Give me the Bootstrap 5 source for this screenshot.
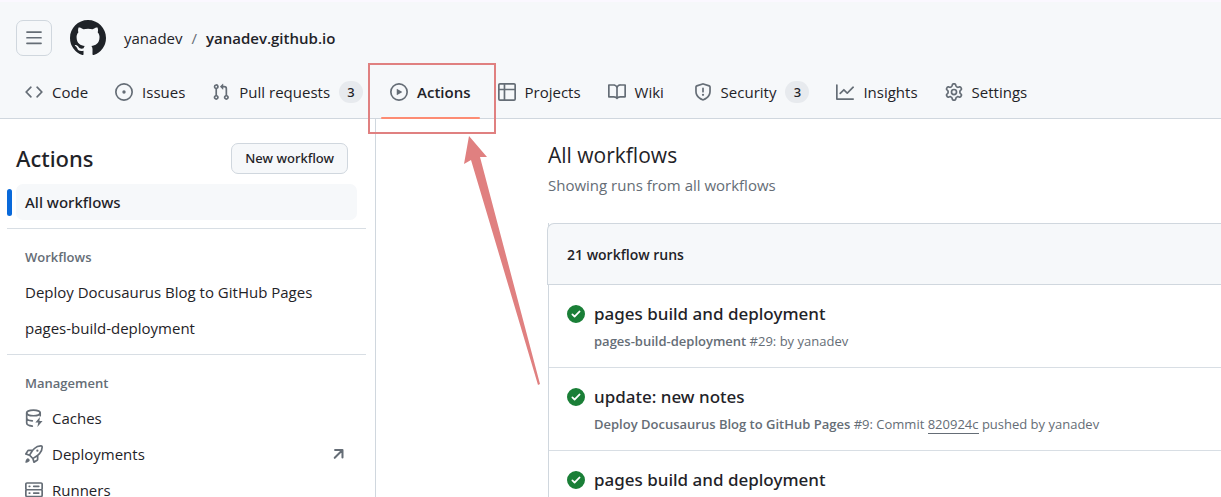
<!DOCTYPE html>
<html lang="en">
<head>
<meta charset="utf-8">
<meta name="viewport" content="width=device-width, initial-scale=1">
<title>Actions · yanadev/yanadev.github.io</title>
<link href="https://cdn.jsdelivr.net/npm/bootstrap@5.3.0/dist/css/bootstrap.min.css" rel="stylesheet">
<style>
  :root { --ink: #1f2328; --muted: #656d76; --line: #d0d7de; --soft-line: #d8dee4; --canvas: #f6f8fa; --note: #e08080; }
  body { font-family: "Open Sans", "Noto Sans", sans-serif; font-size: 15px; line-height: 24px; color: var(--ink); }
  a { color: inherit; text-decoration: none; }
  .oct { width: 18px; height: 18px; fill: currentColor; flex: none; color: var(--muted); }
  .app-header { background: var(--canvas); border-bottom: 1px solid var(--line); border-top: 2px solid #fbf8ff; }
  .top-row { padding: 18px 16px 0; gap: 18px; }
  .crumbs { gap: 9px; }
  .menu-btn { width: 36px; height: 36px; border: 1px solid var(--line); border-radius: 7px; background: transparent; }
  .logo { width: 36px; height: 36px; fill: #1f2328; }
  .crumb-sep { color: var(--muted); }
  .repo-tabs { padding: 9px 16px 0; gap: 9px; }
  .repo-tabs .nav-link { display: flex; align-items: center; gap: 9px; min-width: 77px; height: 53px; padding: 0 9px; color: var(--ink); white-space: nowrap; position: relative; }
  .repo-tabs .active { font-weight: 600; }
  .repo-tabs .active::after { content: ""; position: absolute; left: 0; right: 0; bottom: -1px; height: 2px; background: #fd8c73; border-radius: 2px; }
  .counter { min-width: 24px; height: 22px; border-radius: 11px; background: #e7eaee; font-size: 13px; line-height: 22px; font-weight: 500; text-align: center; }
  .note-box { position: absolute; left: -13px; top: -2px; width: 128px; height: 71px; border: 2px solid var(--note); z-index: 2; pointer-events: none; }
  .note-arrow { position: absolute; left: 82px; top: 71px; width: 78px; height: 250px; fill: var(--note); z-index: 2; pointer-events: none; }
  .side { flex: 0 0 376px; border-right: 1px solid var(--line); padding: 24px 9px 0 7px; }
  .side-head { padding: 0 18px 0 9px; margin-bottom: 10px; }
  .side h1, .runs-area h1 { line-height: 31px; margin: 0; }
  .side h1, .new-btn, .side-link.current, .run-title, .counter { font-family: "Noto Sans", "Open Sans", sans-serif; font-weight: 500; }
  .side h1 { font-size: 22px; }
  .new-btn { height: 31px; padding: 0 13px; border: 1px solid var(--line); border-radius: 7px; background: var(--canvas); color: var(--ink); font-size: 13px; line-height: 29px; }
  .side-link { display: flex; align-items: center; gap: 9px; height: 36px; margin: 0 9px; padding: 0 9px; border-radius: 7px; position: relative; }
  .side-link.current { background: var(--canvas); }
  .side-link.current::before { content: ""; position: absolute; left: -9px; top: 5px; width: 5px; height: 27px; border-radius: 3px; background: #0969da; }
  .side hr { margin: 8px 0; color: var(--soft-line); opacity: 1; }
  .side h2 { height: 37px; margin: 0; padding: 10px 18px 0; font-size: 13px; line-height: 20px; font-weight: 600; color: var(--muted); }
  .runs-area { padding: 21px 0 0 172px; min-width: 0; }
  .runs-area h1 { font-size: 21px; font-weight: 400; }
  .lede { color: var(--muted); margin: 2px 0 26px; }
  .runs { border-left: 1px solid var(--line); }
  .runs-head { margin-left: -2px; height: 62px; padding: 2px 0 0 19px; border: 1px solid var(--line); border-right: 0; border-top-left-radius: 7px; background: var(--canvas); font-weight: 600; font-size: 14px; }
  .run { height: 83px; padding: 17px 18px; gap: 9px; border-bottom: 1px solid var(--soft-line); }
  .run .oct { color: #1a7f37; margin-top: 3px; }
  .run-title { display: block; font-size: 17px; line-height: 24px; }
  .run-meta { display: block; font-size: 13px; line-height: 20px; margin-top: 5px; color: var(--muted); white-space: nowrap; }
  .run-meta b { font-weight: 600; }
  .sha { border-bottom: 1px solid var(--muted); }
</style>
</head>
<body class="vh-100 overflow-hidden d-flex flex-column bg-white">
<svg class="d-none" xmlns="http://www.w3.org/2000/svg">
  <symbol id="check" viewBox="0 0 16 16"><path d="M8 16A8 8 0 1 1 8 0a8 8 0 0 1 0 16Zm3.78-9.72a.751.751 0 0 0-.018-1.042.751.751 0 0 0-1.042-.018L6.75 9.19 5.28 7.72a.751.751 0 0 0-1.042.018.751.751 0 0 0-.018 1.042l2 2a.75.75 0 0 0 1.06 0Z"/></symbol>
</svg>

<header class="app-header">
  <div class="top-row d-flex align-items-center">
    <button class="menu-btn d-flex align-items-center justify-content-center p-0" type="button" aria-label="Open menu">
      <svg class="oct" viewBox="0 0 16 16"><path d="M1 2.75A.75.75 0 0 1 1.75 2h12.5a.75.75 0 0 1 0 1.5H1.75A.75.75 0 0 1 1 2.75Zm0 5A.75.75 0 0 1 1.75 7h12.5a.75.75 0 0 1 0 1.5H1.75A.75.75 0 0 1 1 7.75ZM1.75 12h12.5a.75.75 0 0 1 0 1.5H1.75a.75.75 0 0 1 0-1.5Z"/></svg>
    </button>
    <a href="#" aria-label="Homepage" class="d-flex">
      <svg class="logo" viewBox="0 0 16 16"><path d="M8 0c4.42 0 8 3.58 8 8a8.013 8.013 0 0 1-5.45 7.59c-.4.08-.55-.17-.55-.38 0-.27.01-1.13.01-2.2 0-.75-.25-1.23-.54-1.48 1.78-.2 3.65-.88 3.65-3.95 0-.88-.31-1.59-.82-2.15.08-.2.36-1.02-.08-2.12 0 0-.67-.22-2.2.82-.64-.18-1.32-.27-2-.27-.68 0-1.36.09-2 .27-1.53-1.03-2.2-.82-2.2-.82-.44 1.1-.16 1.92-.08 2.12-.51.56-.82 1.28-.82 2.15 0 3.06 1.86 3.75 3.64 3.95-.23.2-.44.55-.51 1.07-.46.21-1.61.55-2.33-.66-.15-.24-.6-.83-1.23-.82-.67.01-.27.38.01.53.34.19.73.9.82 1.13.16.45.68 1.31 2.69.94 0 .67.01 1.3.01 1.49 0 .21-.15.45-.55.38A7.995 7.995 0 0 1 0 8c0-4.42 3.58-8 8-8Z"/></svg>
    </a>
    <nav class="crumbs d-flex" aria-label="Breadcrumb">
      <a href="#">yanadev</a><span class="crumb-sep">/</span><a href="#" class="fw-semibold">yanadev.github.io</a>
    </nav>
  </div>
  <nav class="repo-tabs nav flex-nowrap" aria-label="Repository">
    <a class="nav-link" href="#"><svg class="oct" viewBox="0 0 16 16"><path d="m11.28 3.22 4.25 4.25a.75.75 0 0 1 0 1.06l-4.25 4.25a.749.749 0 0 1-1.275-.326.749.749 0 0 1 .215-.734L13.94 8l-3.72-3.72a.749.749 0 0 1 .326-1.275.749.749 0 0 1 .734.215Zm-6.56 0a.751.751 0 0 1 1.042.018.751.751 0 0 1 .018 1.042L2.06 8l3.72 3.72a.749.749 0 0 1-.326 1.275.749.749 0 0 1-.734-.215L.47 8.53a.75.75 0 0 1 0-1.06Z"/></svg><span>Code</span></a>
    <a class="nav-link" href="#"><svg class="oct" viewBox="0 0 16 16"><path d="M8 9.5a1.5 1.5 0 1 0 0-3 1.5 1.5 0 0 0 0 3Z"/><path d="M8 0a8 8 0 1 1 0 16A8 8 0 0 1 8 0ZM1.5 8a6.5 6.5 0 1 0 13 0 6.5 6.5 0 0 0-13 0Z"/></svg><span>Issues</span></a>
    <a class="nav-link" href="#"><svg class="oct" viewBox="0 0 16 16"><path d="M1.5 3.25a2.25 2.25 0 1 1 3 2.122v5.256a2.251 2.251 0 1 1-1.5 0V5.372A2.25 2.25 0 0 1 1.5 3.25Zm5.677-.177L9.573.677A.25.25 0 0 1 10 .854V2.5h1A2.5 2.5 0 0 1 13.5 5v5.628a2.251 2.251 0 1 1-1.5 0V5a1 1 0 0 0-1-1h-1v1.646a.25.25 0 0 1-.427.177L7.177 3.427a.25.25 0 0 1 0-.354ZM3.75 2.5a.75.75 0 1 0 0 1.5.75.75 0 0 0 0-1.5Zm0 9.5a.75.75 0 1 0 0 1.5.75.75 0 0 0 0-1.5Zm8.25.75a.75.75 0 1 0 1.5 0 .75.75 0 0 0-1.5 0Z"/></svg><span>Pull requests</span><span class="counter">3</span></a>
    <div class="position-relative">
      <a class="nav-link active" href="#" aria-current="page"><svg class="oct" viewBox="0 0 16 16"><path d="M8 0a8 8 0 1 1 0 16A8 8 0 0 1 8 0ZM1.5 8a6.5 6.5 0 1 0 13 0 6.5 6.5 0 0 0-13 0Zm4.879-2.773 4.264 2.559a.25.25 0 0 1 0 .428l-4.264 2.559A.25.25 0 0 1 6 10.559V5.442a.25.25 0 0 1 .379-.215Z"/></svg><span>Actions</span></a>
      <div class="note-box"></div>
      <svg class="note-arrow" viewBox="0 0 78 250" aria-hidden="true"><path d="M6 0 24 21 17 21 77 248 75 249 8 24 1 28Z"/></svg>
    </div>
    <a class="nav-link" href="#"><svg class="oct" viewBox="0 0 16 16"><path d="M0 1.75C0 .784.784 0 1.75 0h12.5C15.216 0 16 .784 16 1.75v12.5A1.75 1.75 0 0 1 14.25 16H1.75A1.75 1.75 0 0 1 0 14.25ZM6.5 6.5v8h7.75a.25.25 0 0 0 .25-.25V6.5Zm8-1.5V1.75a.25.25 0 0 0-.25-.25H6.5V5Zm-13 1.5v7.75c0 .138.112.25.25.25H5v-8ZM5 5V1.5H1.75a.25.25 0 0 0-.25.25V5Z"/></svg><span>Projects</span></a>
    <a class="nav-link" href="#"><svg class="oct" viewBox="0 0 16 16"><path d="M0 1.75A.75.75 0 0 1 .75 1h4.253c1.227 0 2.317.59 3 1.501A3.743 3.743 0 0 1 11.006 1h4.245a.75.75 0 0 1 .75.75v10.5a.75.75 0 0 1-.75.75h-4.507a2.25 2.25 0 0 0-1.591.659l-.622.621a.75.75 0 0 1-1.06 0l-.622-.621A2.25 2.25 0 0 0 5.258 13H.75a.75.75 0 0 1-.75-.75Zm7.251 10.324.004-5.073-.002-2.253A2.25 2.25 0 0 0 5.003 2.5H1.5v9h3.757a3.75 3.75 0 0 1 1.994.574ZM8.755 4.75l-.004 7.322a3.752 3.752 0 0 1 1.992-.572H14.5v-9h-3.495a2.25 2.25 0 0 0-2.25 2.25Z"/></svg><span>Wiki</span></a>
    <a class="nav-link" href="#"><svg class="oct" viewBox="0 0 16 16"><path d="M7.467.133a1.748 1.748 0 0 1 1.066 0l5.25 1.68A1.75 1.75 0 0 1 15 3.48V7c0 1.566-.32 3.182-1.303 4.682-.983 1.498-2.585 2.813-5.032 3.855a1.697 1.697 0 0 1-1.33 0c-2.447-1.042-4.049-2.357-5.032-3.855C1.32 10.182 1 8.566 1 7V3.48a1.75 1.75 0 0 1 1.217-1.667Zm.61 1.429a.25.25 0 0 0-.153 0l-5.25 1.68a.25.25 0 0 0-.174.238V7c0 1.358.275 2.666 1.057 3.86.784 1.194 2.121 2.34 4.366 3.297a.196.196 0 0 0 .154 0c2.245-.956 3.582-2.104 4.366-3.298C13.225 9.666 13.5 8.36 13.5 7V3.48a.251.251 0 0 0-.174-.237l-5.25-1.68ZM8.75 4.75v3a.75.75 0 0 1-1.5 0v-3a.75.75 0 0 1 1.5 0ZM9 10.5a1 1 0 1 1-2 0 1 1 0 0 1 2 0Z"/></svg><span>Security</span><span class="counter">3</span></a>
    <a class="nav-link" href="#"><svg class="oct" viewBox="0 0 16 16"><path d="M1.5 1.75V13.5h13.75a.75.75 0 0 1 0 1.5H.75a.75.75 0 0 1-.75-.75V1.75a.75.75 0 0 1 1.5 0Zm14.28 2.53-5.25 5.25a.75.75 0 0 1-1.06 0L7 7.06 4.28 9.78a.751.751 0 0 1-1.042-.018.751.751 0 0 1-.018-1.042l3.25-3.25a.75.75 0 0 1 1.06 0L10 7.94l4.72-4.72a.751.751 0 0 1 1.042.018.751.751 0 0 1 .018 1.042Z"/></svg><span>Insights</span></a>
    <a class="nav-link" href="#"><svg class="oct" viewBox="0 0 16 16"><path d="M8 0a8.2 8.2 0 0 1 .701.031C9.444.095 9.99.645 10.16 1.29l.288 1.107c.018.066.079.158.212.224.231.114.454.243.668.386.123.082.233.09.299.071l1.103-.303c.644-.176 1.392.021 1.82.63.27.385.506.792.704 1.218.315.675.111 1.422-.364 1.891l-.814.806c-.049.048-.098.147-.088.294.016.257.016.515 0 .772-.01.147.038.246.088.294l.814.806c.475.469.679 1.216.364 1.891a7.977 7.977 0 0 1-.704 1.217c-.428.61-1.176.807-1.82.63l-1.102-.302c-.067-.019-.177-.011-.3.071a5.909 5.909 0 0 1-.668.386c-.133.066-.194.158-.211.224l-.29 1.106c-.168.646-.715 1.196-1.458 1.26a8.006 8.006 0 0 1-1.402 0c-.743-.064-1.289-.614-1.458-1.26l-.289-1.106c-.018-.066-.079-.158-.212-.224a5.738 5.738 0 0 1-.668-.386c-.123-.082-.233-.09-.299-.071l-1.103.303c-.644.176-1.392-.021-1.82-.63a8.12 8.12 0 0 1-.704-1.218c-.315-.675-.111-1.422.363-1.891l.815-.806c.05-.048.098-.147.088-.294a6.214 6.214 0 0 1 0-.772c.01-.147-.038-.246-.088-.294l-.815-.806C.635 6.045.431 5.298.746 4.623a7.92 7.92 0 0 1 .704-1.217c.428-.61 1.176-.807 1.82-.63l1.102.302c.067.019.177.011.3-.071.214-.143.437-.272.668-.386.133-.066.194-.158.211-.224l.29-1.106C6.009.645 6.556.095 7.299.03 7.53.01 7.764 0 8 0Zm-.571 1.525c-.036.003-.108.036-.137.146l-.289 1.105c-.147.561-.549.967-.998 1.189-.173.086-.34.183-.5.29-.417.278-.97.423-1.529.27l-1.103-.303c-.109-.03-.175.016-.195.045-.22.312-.412.644-.573.99-.014.031-.021.11.059.19l.815.806c.411.406.562.957.53 1.456a4.709 4.709 0 0 0 0 .582c.032.499-.119 1.05-.53 1.456l-.815.806c-.081.08-.073.159-.059.19.162.346.353.677.573.989.02.03.085.076.195.046l1.102-.303c.56-.153 1.113-.008 1.53.27.161.107.328.204.501.29.447.222.85.629.997 1.189l.289 1.105c.029.109.101.143.137.146a6.6 6.6 0 0 0 1.142 0c.036-.003.108-.036.137-.146l.289-1.105c.147-.561.549-.967.998-1.189.173-.086.34-.183.5-.29.417-.278.97-.423 1.529-.27l1.103.303c.109.029.175-.016.195-.045.22-.313.411-.644.573-.99.014-.031.021-.11-.059-.19l-.815-.806c-.411-.406-.562-.957-.53-1.456a4.709 4.709 0 0 0 0-.582c-.032-.499.119-1.05.53-1.456l.815-.806c.081-.08.073-.159.059-.19a6.464 6.464 0 0 0-.573-.989c-.02-.03-.085-.076-.195-.046l-1.102.303c-.56.153-1.113.008-1.53-.27a4.44 4.44 0 0 0-.501-.29c-.447-.222-.85-.629-.997-1.189l-.289-1.105c-.029-.11-.101-.143-.137-.146a6.6 6.6 0 0 0-1.142 0ZM11 8a3 3 0 1 1-6 0 3 3 0 0 1 6 0ZM9.5 8a1.5 1.5 0 1 0-3.001.001A1.5 1.5 0 0 0 9.5 8Z"/></svg><span>Settings</span></a>
  </nav>
</header>

<div class="d-flex flex-grow-1">
  <aside class="side">
    <div class="side-head d-flex align-items-center justify-content-between">
      <h1>Actions</h1>
      <button class="new-btn" type="button">New workflow</button>
    </div>
    <nav aria-label="Actions workflows">
      <a class="side-link current" href="#">All workflows</a>
      <hr>
      <h2>Workflows</h2>
      <a class="side-link" href="#">Deploy Docusaurus Blog to GitHub Pages</a>
      <a class="side-link" href="#">pages-build-deployment</a>
      <hr>
      <h2>Management</h2>
      <a class="side-link" href="#"><svg class="oct" viewBox="0 0 16 16"><g fill="none" stroke="currentColor" stroke-width="1.5" stroke-linecap="round"><ellipse cx="7.5" cy="3.5" rx="6" ry="2.5"/><path d="M1.5 3.5v9c0 1.2 2.2 2.4 5 2.7M13.5 3.5v2.5M1.5 8c0 1.4 2.2 2.4 5 2.6"/></g><path d="M13.3 7.2 9.2 12.1h2.6l-.8 3.8 4.6-5.3h-2.8Z"/></svg>Caches</a>
      <a class="side-link" href="#"><svg class="oct" viewBox="0 0 16 16"><path d="M14.064 0h.186C15.216 0 16 .784 16 1.75v.186a8.752 8.752 0 0 1-2.564 6.186l-.458.459c-.314.314-.641.616-.979.904v3.207c0 .608-.315 1.172-.833 1.49l-2.774 1.707a.749.749 0 0 1-1.11-.418l-.954-3.102a1.214 1.214 0 0 1-.145-.125L3.754 9.816a1.218 1.218 0 0 1-.124-.145L.528 8.717a.749.749 0 0 1-.418-1.11l1.71-2.774A1.748 1.748 0 0 1 3.31 4h3.204c.288-.338.59-.665.904-.979l.459-.458A8.749 8.749 0 0 1 14.064 0ZM8.938 3.623h-.002l-.458.458c-.76.76-1.437 1.598-2.02 2.5l-1.5 2.317 2.143 2.143 2.317-1.5c.902-.583 1.74-1.26 2.499-2.02l.459-.458a7.25 7.25 0 0 0 2.123-5.127V1.75a.25.25 0 0 0-.25-.25h-.186a7.249 7.249 0 0 0-5.125 2.123ZM3.56 14.56c-.732.732-2.334 1.045-3.005 1.148a.234.234 0 0 1-.201-.064.234.234 0 0 1-.064-.201c.103-.671.416-2.273 1.15-3.003a1.502 1.502 0 1 1 2.12 2.12Zm6.94-3.935c-.088.06-.177.118-.266.175l-2.35 1.521.548 1.783 1.949-1.2a.25.25 0 0 0 .119-.213ZM3.678 8.116 5.2 5.766c.058-.09.117-.178.176-.266H3.309a.25.25 0 0 0-.213.119l-1.2 1.95ZM12 5a1 1 0 1 1-2 0 1 1 0 0 1 2 0Z"/></svg>Deployments
        <svg class="oct ms-auto" viewBox="0 0 16 16"><path d="M4.5 4.5h6.6v6.6M11.1 4.5 4.2 11.4" fill="none" stroke="currentColor" stroke-width="1.8" stroke-linecap="round" stroke-linejoin="round"/></svg></a>
      <a class="side-link" href="#"><svg class="oct" viewBox="0 0 16 16"><path d="M1.75 1h12.5c.966 0 1.75.784 1.75 1.75v4c0 .372-.116.717-.314 1 .198.283.314.628.314 1v4a1.75 1.75 0 0 1-1.75 1.75H1.75A1.75 1.75 0 0 1 0 12.75v-4c0-.358.109-.707.314-1a1.739 1.739 0 0 1-.314-1v-4C0 1.784.784 1 1.75 1ZM1.5 2.75v4c0 .138.112.25.25.25h12.5a.25.25 0 0 0 .25-.25v-4a.25.25 0 0 0-.25-.25H1.75a.25.25 0 0 0-.25.25Zm.25 5.75a.25.25 0 0 0-.25.25v4c0 .138.112.25.25.25h12.5a.25.25 0 0 0 .25-.25v-4a.25.25 0 0 0-.25-.25ZM7 4.75A.75.75 0 0 1 7.75 4h4.5a.75.75 0 0 1 0 1.5h-4.5A.75.75 0 0 1 7 4.75ZM7.75 10h4.5a.75.75 0 0 1 0 1.5h-4.5a.75.75 0 0 1 0-1.5ZM3 4.75A.75.75 0 0 1 3.75 4h.5a.75.75 0 0 1 0 1.5h-.5A.75.75 0 0 1 3 4.75ZM3.75 10h.5a.75.75 0 0 1 0 1.5h-.5a.75.75 0 0 1 0-1.5Z"/></svg>Runners</a>
    </nav>
  </aside>

  <main class="runs-area flex-grow-1">
    <h1>All workflows</h1>
    <p class="lede">Showing runs from all workflows</p>
    <section class="runs" aria-label="Workflow runs">
      <div class="runs-head d-flex align-items-center">21 workflow runs</div>
      <div class="run d-flex">
        <svg class="oct"><use href="#check"/></svg>
        <div><a class="run-title" href="#">pages build and deployment</a><span class="run-meta"><b>pages-build-deployment</b> #29: by yanadev</span></div>
      </div>
      <div class="run d-flex">
        <svg class="oct"><use href="#check"/></svg>
        <div><a class="run-title" href="#">update: new notes</a><span class="run-meta"><b>Deploy Docusaurus Blog to GitHub Pages</b> #9: Commit <a class="sha" href="#">820924c</a> pushed by yanadev</span></div>
      </div>
      <div class="run d-flex">
        <svg class="oct"><use href="#check"/></svg>
        <div><a class="run-title" href="#">pages build and deployment</a></div>
      </div>
    </section>
  </main>
</div>
<script src="https://cdn.jsdelivr.net/npm/bootstrap@5.3.0/dist/js/bootstrap.bundle.min.js"></script>
</body>
</html>
